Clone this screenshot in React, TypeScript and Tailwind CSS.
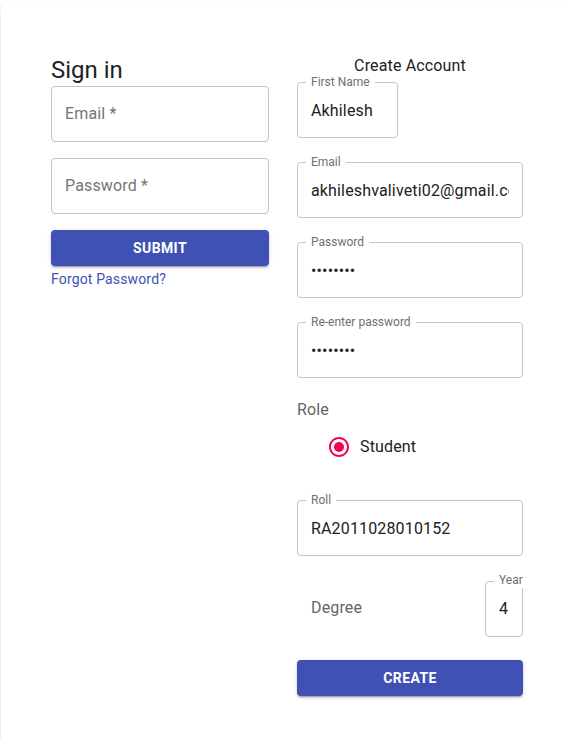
import React from "react";

const font = { fontFamily: "Roboto, 'Liberation Sans', sans-serif" };

function Field({
  label,
  value,
  type = "text",
  className = "",
}: {
  label: string;
  value: string;
  type?: string;
  className?: string;
}) {
  return (
    <div className={`relative h-[56px] rounded-[4px] border border-[#c4c4c4] ${className}`}>
      <span className="absolute left-[8px] top-[-8px] h-[14px] bg-white px-[5px] text-[12px] leading-[14px] text-[#6f6f6f] whitespace-nowrap">
        {label}
      </span>
      <input
        readOnly
        type={type}
        defaultValue={value}
        className="h-full w-full bg-transparent px-[13px] text-[16px] tracking-[0.15px] text-[#212121] outline-none"
        style={font}
      />
    </div>
  );
}

function PlaceholderField({ label, className = "" }: { label: string; className?: string }) {
  return (
    <div
      className={`flex h-[56px] items-center rounded-[4px] border border-[#c4c4c4] px-[13px] text-[16px] tracking-[0.15px] text-[#757575] ${className}`}
    >
      {label}
    </div>
  );
}

const btnShadow =
  "shadow-[0px_3px_1px_-2px_rgba(0,0,0,0.2),0px_2px_2px_0px_rgba(0,0,0,0.14),0px_1px_5px_0px_rgba(0,0,0,0.12)]";

export default function App() {
  return (
    <div className="h-[740px] w-[567px] overflow-hidden bg-white" style={font}>
      <div className="ml-[1px] mt-[3px] h-[800px] w-[620px] rounded-[4px] bg-white pl-[50px] pt-[50px] shadow-[0px_2px_1px_-1px_rgba(0,0,0,0.2),0px_1px_1px_0px_rgba(0,0,0,0.14),0px_1px_3px_0px_rgba(0,0,0,0.12)]">
        <div className="flex items-start gap-[28px]">
          {/* Sign in column */}
          <div className="mt-[1px] flex w-[218px] flex-col">
            <div className="h-[32px] text-[24px] leading-[32px] text-[#212121]">Sign in</div>
            <PlaceholderField label="Email *" />
            <PlaceholderField label="Password *" className="mt-[16px]" />
            <button
              className={`mt-[16px] h-[36px] w-full rounded-[4px] bg-[#3f51b5] text-[14px] font-bold uppercase tracking-[0.4px] text-white ${btnShadow}`}
            >
              Submit
            </button>
            <div className="mt-[3px] text-[14px] leading-[20px] tracking-[0.15px] text-[#3f51b5]">Forgot Password?</div>
          </div>

          {/* Create account column */}
          <div className="flex w-[226px] flex-col">
            <div className="mt-[1px] h-[24px] text-center text-[16px] leading-[24px] tracking-[0.15px] text-[#212121]">
              Create Account
            </div>
            <Field label="First Name" value="Akhilesh" className="mt-[4px] w-[101px]" />
            <Field label="Email" value="akhileshvaliveti02@gmail.com" className="mt-[24px]" />
            <Field label="Password" value="akhilesh" type="password" className="mt-[24px]" />
            <Field label="Re-enter password" value="akhilesh" type="password" className="mt-[24px]" />
            <div className="mt-[20px] h-[24px] text-[16px] leading-[24px] tracking-[0.15px] text-[#666666]">Role</div>
            <div className="mt-[4px] flex h-[42px] items-center pl-[30px]">
              <svg width="24" height="24" viewBox="0 0 24 24" fill="#f50057">
                <path d="M12 2C6.48 2 2 6.48 2 12s4.48 10 10 10 10-4.48 10-10S17.52 2 12 2zm0 18c-4.42 0-8-3.58-8-8s3.58-8 8-8 8 3.58 8 8-3.58 8-8 8z" />
                <circle cx="12" cy="12" r="5" />
              </svg>
              <span className="ml-[9px] text-[16px] tracking-[0.15px] text-[#212121]">Student</span>
            </div>
            <Field label="Roll" value="RA2011028010152" className="mt-[32px]" />
            <div className="mt-[25px] flex items-center justify-between">
              <span className="pl-[14px] pb-[2px] text-[16px] tracking-[0.15px] text-[#666666]">Degree</span>
              <div className="relative h-[56px] w-[38px] rounded-[4px] border border-[#c4c4c4]">
                <span className="absolute left-[8px] top-[-9px] h-[15px] bg-white pl-[5px] pr-[2px] text-[12px] leading-[14px] text-[#6f6f6f] whitespace-nowrap">
                  Year
                </span>
                <div className="flex h-full items-center pl-[13px] text-[16px] text-[#212121]">4</div>
              </div>
            </div>
            <button
              className={`mt-[23px] h-[36px] w-full rounded-[4px] bg-[#3f51b5] text-[14px] font-bold uppercase tracking-[0.4px] text-white ${btnShadow}`}
            >
              Create
            </button>
          </div>
        </div>
      </div>
    </div>
  );
}
